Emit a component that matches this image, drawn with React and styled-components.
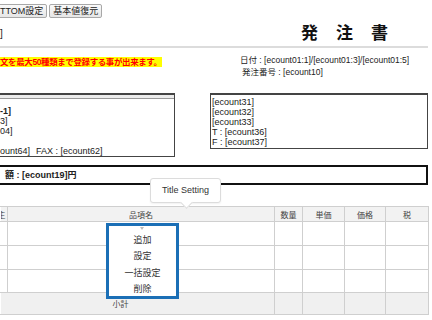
import styled, { createGlobalStyle } from "styled-components";

const GlobalStyle = createGlobalStyle`
  html, body {
    margin: 0;
    padding: 0;
    background: #fff;
    overflow: hidden;
  }
  body {
    width: 432px;
    height: 320px;
    font-family: "Liberation Sans", "Noto Sans CJK JP", sans-serif;
    color: #222;
  }
`;

const Page = styled.div`
  position: relative;
  width: 428px;
`;

const TopRow = styled.div`
  display: flex;
  justify-content: space-between;
  height: 46px;
`;

const TopLeft = styled.div`
  display: flex;
  flex-direction: column;
`;

const Toolbar = styled.div`
  display: flex;
  gap: 2px;
  margin: 4px 0 0 -4px;
`;

const Button = styled.button`
  height: 14px;
  padding: 0 3px;
  border: 1px solid #a8a8a8;
  border-radius: 2px;
  background: linear-gradient(#fafafa, #e6e6e6);
  font-family: inherit;
  font-size: 9px;
  line-height: 12px;
  color: #222;
`;

const Bracket = styled.div`
  margin-top: 11px;
  font-size: 10px;
  line-height: 10px;
`;

const Title = styled.h1`
  margin: 24px 22px 0 0;
  font-size: 17px;
  line-height: 20px;
  font-weight: bold;
  letter-spacing: 18px;
  color: #111;
`;

const Divider = styled.div`
  height: 2px;
  background: #dcdcdc;
`;

const InfoRow = styled.div`
  display: flex;
  justify-content: space-between;
  box-sizing: border-box;
  height: 32px;
  padding-top: 7px;
`;

const Notice = styled.span`
  align-self: flex-start;
  margin-top: 2px;
  background: #ffff00;
  color: #ff0000;
  font-weight: bold;
  font-size: 8.5px;
  letter-spacing: -0.4px;
  line-height: 10px;
`;

const DateBlock = styled.div`
  width: 188px;
  font-size: 8.5px;
  line-height: 11.5px;
  color: #222;
`;

const DateLine = styled.div`
  padding-left: ${(p) => p.$indent || 0}px;
  white-space: nowrap;
`;

const BoxRow = styled.div`
  display: flex;
  gap: 35px;
  align-items: flex-start;
  margin-top: 13px;
`;

const LeftBox = styled.div`
  width: 175px;
  height: 64px;
  box-sizing: border-box;
  border: 1px solid #444;
  border-top-width: 2px;
  border-left: none;
  display: flex;
  flex-direction: column;
`;

const BoxHead = styled.div`
  height: 5px;
  background: #ececec;
  border-bottom: 1px solid #999;
`;

const BoxBody = styled.div`
  padding-top: ${(p) => p.$top}px;
  font-size: 9px;
  line-height: 10px;
`;

const Line = styled.div`
  white-space: nowrap;
  font-weight: ${(p) => (p.$bold ? "bold" : "normal")};
  margin-top: ${(p) => p.$gap || 0}px;
`;

const Fax = styled.span`
  margin-left: 6px;
`;

const RightBox = styled.div`
  flex: 1;
  height: 56px;
  box-sizing: border-box;
  border: 1px solid #444;
  border-top-width: 2px;
  padding-left: 1px;
`;

const AmountBox = styled.div`
  margin-top: 8px;
  height: 20px;
  box-sizing: border-box;
  border: 2px solid #111;
  border-left: none;
  padding-left: 5px;
  font-size: 9px;
  font-weight: bold;
  line-height: 16px;
`;

const Table = styled.table`
  margin-top: 21px;
  width: 428px;
  table-layout: fixed;
  border-collapse: collapse;
  font-size: 8px;
  color: #444;
`;

const Th = styled.th`
  height: 14px;
  padding: 0;
  border: 1px solid #cfcfcf;
  border-left-color: ${(p) => (p.$first ? "transparent" : "#cfcfcf")};
  background: #f2f2f2;
  font-weight: normal;
  text-align: center;
  overflow: hidden;
  white-space: nowrap;
`;

const Cut = styled.span`
  display: inline-block;
  margin-left: -5px;
`;

const Td = styled.td`
  height: ${(p) => p.$h}px;
  padding: 0;
  border: 1px solid #cfcfcf;
  border-left-color: ${(p) => (p.$first ? "transparent" : "#cfcfcf")};
  background: ${(p) => (p.$sum ? "#f0f0f0" : "#fff")};
  text-align: center;
  padding-right: ${(p) => p.$pr || 0}px;
`;

const Tooltip = styled.div`
  position: absolute;
  left: 150px;
  top: 178px;
  width: 71px;
  height: 25px;
  box-sizing: border-box;
  border: 1px solid #dcdcdc;
  border-radius: 3px;
  background: #fff;
  box-shadow: 0 1px 2px rgba(0, 0, 0, 0.06);
  font-size: 9px;
  line-height: 23px;
  text-align: center;
  color: #333;

  &::after {
    content: "";
    position: absolute;
    left: 31px;
    bottom: -5px;
    width: 8px;
    height: 8px;
    background: #fff;
    border-right: 1px solid #dcdcdc;
    border-bottom: 1px solid #dcdcdc;
    transform: rotate(45deg);
  }
`;

const Menu = styled.ul`
  position: absolute;
  left: 106px;
  top: 223px;
  width: 73px;
  height: 76px;
  box-sizing: border-box;
  margin: 0;
  padding: 6px 0 0;
  list-style: none;
  border: 3px solid #1b6fb6;
  background: #fff;
  display: flex;
  flex-direction: column;
  align-items: center;

  &::before {
    content: "";
    position: absolute;
    left: 31px;
    top: 1px;
    border-left: 2px solid transparent;
    border-right: 2px solid transparent;
    border-top: 3px solid #bbb;
  }
`;

const MenuItem = styled.li`
  font-size: 9px;
  line-height: 16.3px;
  color: #333;
`;

const leftLines = [
  { text: "-1]", bold: true },
  { text: "3]" },
  { text: "04]" },
];

const rightLines = ["[ecount31]", "[ecount32]", "[ecount33]", "T : [ecount36]", "F : [ecount37]"];

const columns = [
  { w: 7, label: "主", first: true },
  { w: 267, label: "品項名" },
  { w: 28, label: "数量" },
  { w: 42, label: "単価" },
  { w: 41, label: "価格" },
  { w: 43, label: "税" },
];

const rowHeights = [23, 23, 22];

export default function App() {
  return (
    <>
      <GlobalStyle />
      <Page>
        <TopRow>
          <TopLeft>
            <Toolbar>
              <Button>TTOM設定</Button>
              <Button>基本値復元</Button>
            </Toolbar>
            <Bracket>]</Bracket>
          </TopLeft>
          <Title>発注書</Title>
        </TopRow>
        <Divider />
        <InfoRow>
          <Notice>文を最大50種類まで登録する事が出来ます。</Notice>
          <DateBlock>
            <DateLine>日付 : [ecount01:1]/[ecount01:3]/[ecount01:5]</DateLine>
            <DateLine $indent={2}>発注番号 : [ecount10]</DateLine>
          </DateBlock>
        </InfoRow>
        <BoxRow>
          <LeftBox>
            <BoxHead />
            <BoxBody $top={7}>
              {leftLines.map((l) => (
                <Line key={l.text} $bold={l.bold}>
                  {l.text}
                </Line>
              ))}
              <Line $gap={10}>
                ount64]
                <Fax>FAX : [ecount62]</Fax>
              </Line>
            </BoxBody>
          </LeftBox>
          <RightBox>
            <BoxBody $top={2}>
              {rightLines.map((t) => (
                <Line key={t}>{t}</Line>
              ))}
            </BoxBody>
          </RightBox>
        </BoxRow>
        <AmountBox>額 : [ecount19]円</AmountBox>
        <Table>
          <colgroup>
            {columns.map((c) => (
              <col key={c.label} style={{ width: c.w }} />
            ))}
          </colgroup>
          <thead>
            <tr>
              {columns.map((c) => (
                <Th key={c.label} $first={c.first}>
                  {c.first ? <Cut>{c.label}</Cut> : c.label}
                </Th>
              ))}
            </tr>
          </thead>
          <tbody>
            {rowHeights.map((h, i) => (
              <tr key={i}>
                {columns.map((c) => (
                  <Td key={c.label} $h={h} $first={c.first} />
                ))}
              </tr>
            ))}
            <tr>
              <Td $h={21} $sum $first colSpan={2} $pr={34}>
                小計
              </Td>
              {columns.slice(2).map((c) => (
                <Td key={c.label} $h={21} $sum />
              ))}
            </tr>
          </tbody>
        </Table>
        <Tooltip>Title Setting</Tooltip>
        <Menu>
          <MenuItem>追加</MenuItem>
          <MenuItem>設定</MenuItem>
          <MenuItem>一括設定</MenuItem>
          <MenuItem>削除</MenuItem>
        </Menu>
      </Page>
    </>
  );
}
